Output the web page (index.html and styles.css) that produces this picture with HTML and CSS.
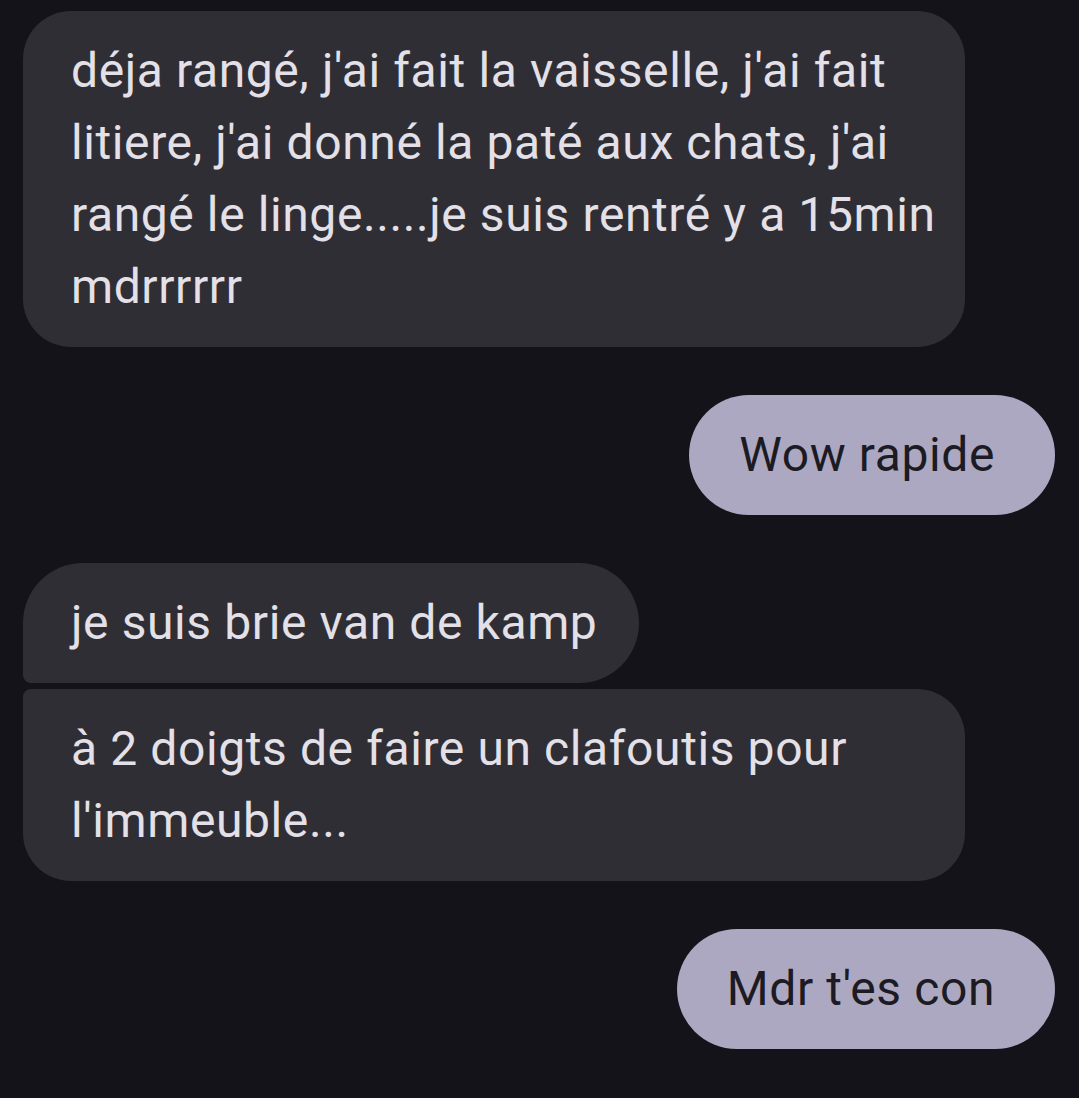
FILE: index.html
```html
<!DOCTYPE html>
<html lang="fr">
<head>
<meta charset="utf-8">
<link rel="stylesheet" href="styles.css">
</head>
<body>
<main class="thread">
  <div class="row in">
    <div class="bubble recv wide">déja rangé, j'ai fait la vaisselle, j'ai fait litiere, j'ai donné la paté aux chats, j'ai rangé le linge.....je suis rentré y a 15min mdrrrrrr</div>
  </div>
  <div class="row out">
    <div class="bubble sent">Wow rapide</div>
  </div>
  <div class="row in group">
    <div class="bubble recv first">je suis brie van de kamp</div>
    <div class="bubble recv last wide">à 2 doigts de faire un clafoutis pour l'immeuble...</div>
  </div>
  <div class="row out">
    <div class="bubble sent">Mdr t'es con</div>
  </div>
</main>
</body>
</html>
```
FILE: styles.css
```css
html, body {
  margin: 0;
  padding: 0;
  background: #141319;
}
body {
  width: 1079px;
  height: 1098px;
  overflow: hidden;
  font-family: Roboto, "Liberation Sans", sans-serif;
}
.thread {
  display: flex;
  flex-direction: column;
  gap: 48px;
  padding: 11px 24px 0 23px;
}
.row {
  display: flex;
  flex-direction: column;
}
.row.in { align-items: flex-start; }
.row.out { align-items: flex-end; }
.row.group { gap: 6px; }
.bubble {
  box-sizing: border-box;
  font-size: 48px;
  line-height: 72px;
  letter-spacing: 0.6px;
  padding: 24px 48px;
  border-radius: 48px;
  max-width: 942px;
}
.bubble.wide {
  width: 942px;
  padding-right: 20px;
}
.recv {
  background: #2f2e35;
  color: #e4e0e8;
}
.sent {
  background: #aca8c1;
  color: #1c1a22;
  border-radius: 60px;
  padding: 24px 60px 24px 50px;
}
.recv.first {
  border-radius: 60px 60px 60px 8px;
  padding-right: 42px;
}
.recv.last {
  border-radius: 8px 48px 48px 48px;
}
```
